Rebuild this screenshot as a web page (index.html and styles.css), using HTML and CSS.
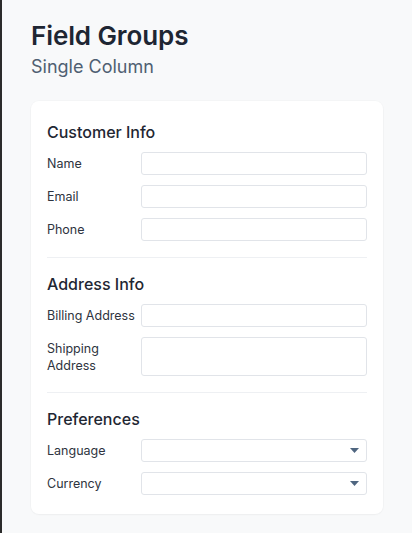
FILE: index.html
```html
<!DOCTYPE html>
<html lang="en">
<head>
<meta charset="utf-8">
<title>Field Groups</title>
<link rel="stylesheet" href="styles.css">
</head>
<body>
<main class="page">
  <header class="page-header">
    <h1 class="title">Field Groups</h1>
    <p class="subtitle">Single Column</p>
  </header>
  <form class="card">
    <section class="group">
      <h2 class="group-title">Customer Info</h2>
      <div class="fields">
        <label class="field"><span class="label">Name</span><input class="input" type="text"></label>
        <label class="field"><span class="label">Email</span><input class="input" type="email"></label>
        <label class="field"><span class="label">Phone</span><input class="input" type="tel"></label>
      </div>
    </section>
    <hr class="divider">
    <section class="group">
      <h2 class="group-title">Address Info</h2>
      <div class="fields">
        <label class="field"><span class="label">Billing Address</span><input class="input" type="text"></label>
        <label class="field"><span class="label">Shipping Address</span><textarea class="input textarea"></textarea></label>
      </div>
    </section>
    <hr class="divider">
    <section class="group">
      <h2 class="group-title">Preferences</h2>
      <div class="fields">
        <label class="field"><span class="label">Language</span>
          <span class="select-wrap"><select class="input select"><option></option></select>
            <svg class="caret" width="9" height="5" viewBox="0 0 9 5"><path d="M0 0H9L4.5 5Z" fill="#4f6680"/></svg></span>
        </label>
        <label class="field"><span class="label">Currency</span>
          <span class="select-wrap"><select class="input select"><option></option></select>
            <svg class="caret" width="9" height="5" viewBox="0 0 9 5"><path d="M0 0H9L4.5 5Z" fill="#4f6680"/></svg></span>
        </label>
      </div>
    </section>
  </form>
</main>
</body>
</html>
```
FILE: styles.css
```css
* { box-sizing: border-box; }
html, body { margin: 0; padding: 0; }
body {
  background: #f8f9fa;
  font-family: Inter, "Noto Sans", "Liberation Sans", sans-serif;
  color: #1f2937;
  min-height: 533px;
  border-left: 2px solid #2b2b2b;
}
.page {
  padding: 20px 29px 20px 29px;
}
.page-header { margin-bottom: 22px; }
.title {
  margin: 0;
  font-size: 26px;
  line-height: 32px;
  font-weight: 600;
  color: #1e2633;
  letter-spacing: -0.1px;
}
.subtitle {
  margin: 3px 0 0;
  font-size: 18px;
  line-height: 24px;
  font-weight: 400;
  color: #4f5f72;
}
.card {
  background: #fff;
  border-radius: 8px;
  padding: 20px 16px 19px 16px;
  box-shadow: 0 0 0 1px rgba(0,0,0,0.015), 0 1px 2px rgba(0,0,0,0.03);
  width: 352px;
}
.group-title {
  margin: 0 0 9px;
  font-size: 16px;
  line-height: 22px;
  font-weight: 500;
  color: #1f2733;
}
.fields {
  display: flex;
  flex-direction: column;
  gap: 10px;
}
.field {
  display: grid;
  grid-template-columns: 89px 1fr;
  column-gap: 5px;
  align-items: center;
}
.label {
  font-size: 12.5px;
  line-height: 17px;
  color: #2e3440;
}
.input {
  display: block;
  width: 100%;
  height: 23px;
  border: 1px solid #e1e4e9;
  border-radius: 3px;
  background: #fff;
  font: inherit;
  margin: 0;
  padding: 0 8px;
  outline: none;
}
.textarea {
  height: 39px;
  resize: none;
}
.select-wrap {
  position: relative;
  display: block;
}
.select {
  appearance: none;
  -webkit-appearance: none;
}
.caret {
  position: absolute;
  right: 8px;
  top: 9px;
  pointer-events: none;
}
.divider {
  border: 0;
  height: 1px;
  background: #eef0f3;
  margin: 16px 0 15px;
}
```
